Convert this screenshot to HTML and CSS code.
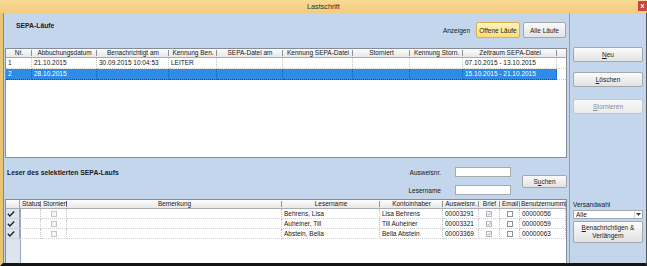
FILE: index.html
```html
<!DOCTYPE html>
<html lang="de">
<head>
<meta charset="utf-8">
<title>Lastschrift</title>
<link rel="stylesheet" href="styles.css">
</head>
<body>
<div class="window">
  <header class="titlebar">
    <span class="title">Lastschrift</span>
    <span class="close">x</span>
  </header>
  <div class="frame">
    <main class="main">
      <section class="runs">
        <div class="runs-head">
          <h2 class="section-title">SEPA-Läufe</h2>
          <div class="filter">
            <span class="filter-label">Anzeigen</span>
            <button class="btn btn-active btn-open">Offene Läufe</button>
            <button class="btn btn-all">Alle Läufe</button>
          </div>
        </div>
        <div class="grid grid-runs">
          <table class="tbl">
            <colgroup>
              <col style="width:26px"><col style="width:65px"><col style="width:72px"><col style="width:48px"><col style="width:66px"><col style="width:70px"><col style="width:57px"><col style="width:53px"><col style="width:94px"><col style="width:9px">
            </colgroup>
            <thead>
              <tr><th>Nr.</th><th>Abbuchungsdatum</th><th>Benachrichtigt am</th><th>Kennung Ben.</th><th>SEPA-Datei am</th><th>Kennung SEPA-Datei</th><th>Storniert</th><th>Kennung Storn.</th><th>Zeitraum SEPA-Datei</th><th class="fill"></th></tr>
            </thead>
            <tbody>
              <tr><td>1</td><td>21.10.2015</td><td>30.09.2015 10:04:53</td><td>LEITER</td><td></td><td></td><td></td><td></td><td>07.10.2015 - 13.10.2015</td><td class="fill"></td></tr>
              <tr class="sel"><td>2</td><td>28.10.2015</td><td></td><td></td><td></td><td></td><td></td><td></td><td>15.10.2015 - 21.10.2015</td><td class="fill"></td></tr>
            </tbody>
          </table>
        </div>
      </section>
      <section class="readers">
        <div class="readers-head">
          <h2 class="section-title">Leser des selektierten SEPA-Laufs</h2>
          <div class="search">
            <div class="fields">
              <label class="field-label" for="ausweis">Ausweisnr.</label>
              <input class="field-input" id="ausweis" type="text">
              <label class="field-label" for="lesername">Lesername</label>
              <input class="field-input" id="lesername" type="text">
            </div>
            <button class="btn btn-search">S<u>u</u>chen</button>
          </div>
        </div>
        <div class="grid grid-readers">
          <table class="tbl tbl-readers">
            <colgroup>
              <col style="width:14px"><col style="width:21px"><col style="width:26px"><col style="width:215px"><col style="width:98px"><col style="width:63px"><col style="width:36px"><col style="width:21px"><col style="width:20px"><col style="width:46px">
            </colgroup>
            <thead>
              <tr><th class="rowhead"></th><th>Status</th><th>Storniert</th><th>Bemerkung</th><th>Lesername</th><th>Kontoinhaber</th><th>Ausweisnr.</th><th>Brief</th><th>Email</th><th class="last">Benutzernumm</th></tr>
            </thead>
            <tbody>
              <tr>
                <td class="rowhead"><svg class="tick" width="8" height="6" viewBox="0 0 8 6"><path d="M0.8 2.8 L2.9 5 L7.2 0.6" fill="none" stroke="#1c2633" stroke-width="1.4"/></svg></td>
                <td></td><td class="c"><span class="cb cb-dis"></span></td><td></td><td>Behrens, Lisa</td><td>Lisa Behrens</td><td>00003291</td>
                <td class="c"><svg class="cbsvg" width="6" height="6" viewBox="0 0 6 6"><rect x="0.5" y="0.5" width="5" height="5" fill="#fafafa" stroke="#b5b9be"/><path d="M1.5 3 L2.6 4.2 L4.6 1.6" fill="none" stroke="#8d9298" stroke-width="0.8"/></svg></td><td class="c"><span class="cb"></span></td><td>00000056</td>
              </tr>
              <tr>
                <td class="rowhead"><svg class="tick" width="8" height="6" viewBox="0 0 8 6"><path d="M0.8 2.8 L2.9 5 L7.2 0.6" fill="none" stroke="#1c2633" stroke-width="1.4"/></svg></td>
                <td></td><td class="c"><span class="cb cb-dis"></span></td><td></td><td>Auheiner, Till</td><td>Till Auheiner</td><td>00003321</td>
                <td class="c"><svg class="cbsvg" width="6" height="6" viewBox="0 0 6 6"><rect x="0.5" y="0.5" width="5" height="5" fill="#fafafa" stroke="#b5b9be"/><path d="M1.5 3 L2.6 4.2 L4.6 1.6" fill="none" stroke="#8d9298" stroke-width="0.8"/></svg></td><td class="c"><span class="cb"></span></td><td>00000059</td>
              </tr>
              <tr>
                <td class="rowhead"><svg class="tick" width="8" height="6" viewBox="0 0 8 6"><path d="M0.8 2.8 L2.9 5 L7.2 0.6" fill="none" stroke="#1c2633" stroke-width="1.4"/></svg></td>
                <td></td><td class="c"><span class="cb cb-dis"></span></td><td></td><td>Abstein, Bella</td><td>Bella Abstein</td><td>00003369</td>
                <td class="c"><svg class="cbsvg" width="6" height="6" viewBox="0 0 6 6"><rect x="0.5" y="0.5" width="5" height="5" fill="#fafafa" stroke="#b5b9be"/><path d="M1.5 3 L2.6 4.2 L4.6 1.6" fill="none" stroke="#8d9298" stroke-width="0.8"/></svg></td><td class="c"><span class="cb"></span></td><td>00000063</td>
              </tr>
            </tbody>
          </table>
        </div>
      </section>
    </main>
    <aside class="side">
      <button class="btn side-btn"><u>N</u>eu</button>
      <button class="btn side-btn btn-delete"><u>L</u>öschen</button>
      <button class="btn side-btn btn-cancel" disabled><u>S</u>tornieren</button>
      <div class="dispatch">
        <span class="dispatch-label">Versandwahl</span>
        <div class="combo"><span class="combo-value">Alle</span><span class="combo-arrow"><svg width="5" height="3" viewBox="0 0 5 3"><path d="M0 0 H5 L2.5 3 Z" fill="#444"/></svg></span></div>
        <button class="btn btn-notify"><u>B</u>enachrichtigen &amp;<br>Verlängern</button>
      </div>
    </aside>
  </div>
</div>
</body>
</html>
```

FILE: styles.css
```css
* { box-sizing: border-box; margin: 0; padding: 0; }
html, body { width: 647px; height: 266px; overflow: hidden; }
body {
  font-family: "Liberation Sans", Arial, sans-serif;
  font-size: 6.5px;
  color: #161616;
  background: #c4d6ec;
}
.window {
  width: 647px;
  height: 266px;
  display: flex;
  flex-direction: column;
  background: #c4d6ec;
}
.titlebar {
  height: 13px;
  flex: none;
  display: grid;
  grid-template-columns: 1fr auto 1fr;
  align-items: center;
  background: linear-gradient(#f8d994, #f3cd80);
}
.titlebar .title { grid-column: 2; font-size: 7.2px; color: #2a2a2a; }
.close {
  grid-column: 3;
  justify-self: end;
  align-self: start;
  width: 9px;
  height: 10px;
  margin-top: 1px;
  background: #c8463c;
  color: #fff;
  font-size: 7px;
  line-height: 9px;
  text-align: center;
  font-weight: bold;
}
.frame {
  flex: 1;
  min-height: 0;
  display: flex;
  border-left: 3px solid #e8c571;
  border-right: 1px solid #4d5560;
  border-bottom: 3px solid #141414;
}
.main {
  width: 566px;
  flex: none;
  display: flex;
  flex-direction: column;
  border-left: 1px solid #7f8896;
}
.runs { height: 145px; display: flex; flex-direction: column; }
.runs-head {
  height: 35px;
  flex: none;
  display: flex;
  justify-content: space-between;
  align-items: flex-start;
  padding: 9px 3px 0 12px;
}
.section-title { font-size: 6.8px; font-weight: bold; line-height: 8px; color: #1a1a1a; }
.filter { display: flex; align-items: center; gap: 3px; }
.filter-label { margin-right: 3px; }
.btn {
  font: inherit;
  color: #222;
  height: 16px;
  border: 1px solid #a3a6aa;
  border-radius: 2px;
  background: linear-gradient(#fbfbfb, #e2e2e2);
}
.btn-active { background: linear-gradient(#fff3bd, #fcdd78); border-color: #d9b04c; }
.btn-open { width: 44px; }
.btn-all { width: 43px; }

.grid {
  flex: 1;
  min-height: 0;
  margin: 0 2px 0 1px;
  background: #fff;
  border: 1px solid #858d99;
  overflow: hidden;
}
.tbl {
  border-collapse: separate;
  border-spacing: 0;
  table-layout: fixed;
  width: 560px;
}
.tbl th {
  font-weight: normal;
  line-height: 8px;
  height: 9px;
  padding: 0 2px;
  text-align: center;
  white-space: nowrap;
  overflow: hidden;
  border-bottom: 1px solid #a9adb3;
  background:
    linear-gradient(#8e9399, #8e9399) right center / 1px 6px no-repeat,
    linear-gradient(#fdfdfd, #e7e7e7);
}
.tbl th.fill { background: linear-gradient(#fdfdfd, #e7e7e7); }
.tbl th.last { padding: 0 0 0 1px; text-align: left; }
.tbl td {
  line-height: 10px;
  height: 11px;
  padding: 0 2px;
  white-space: nowrap;
  overflow: hidden;
  border-right: 1px dotted #c4c4c4;
  border-bottom: 1px dotted #cdcdcd;
}
.tbl td.fill { border-right: 0; }
.tbl tr.sel td:not(.fill) {
  background: #2e8be6;
  color: #fff;
  border-right-color: #1c5ea8;
  border-bottom: 1px dotted #174f8e;
}

.readers { flex: 1; display: flex; flex-direction: column; }
.readers-head {
  height: 41px;
  flex: none;
  display: flex;
  justify-content: space-between;
  align-items: flex-start;
  padding: 9px 2px 0 3px;
}
.readers-head .section-title { margin-top: 2px; }
.search { display: flex; align-items: center; }
.fields {
  display: grid;
  grid-template-columns: auto 56px;
  column-gap: 14px;
  row-gap: 8px;
  align-items: center;
}
.field-label { text-align: right; }
.field-input {
  height: 10px;
  width: 56px;
  border: 1px solid #a7abb0;
  background: #fff;
}
.btn-search { width: 45px; height: 13px; margin-left: 11px; }

.grid-readers {
  border-bottom: 0;
  background: linear-gradient(90deg, #dde4ed 0 14px, #98a6b6 14px 15px, #fff 15px);
}
.tbl-readers td { line-height: 9px; height: 10px; }
.tbl-readers td.rowhead {
  background: #dde4ed;
  border-right: 1px solid #98a6b6;
  border-bottom: 1px solid #c9d1db;
  padding: 0 0 0 1px;
}
.tbl-readers th.rowhead { background: linear-gradient(#fdfdfd, #e7e7e7); border-right: 1px solid #98a6b6; }
.tick { display: block; }
.tbl td.c { text-align: center; }
.cbsvg { display: inline-block; vertical-align: middle; }
.cb {
  display: inline-block;
  width: 6px;
  height: 6px;
  vertical-align: middle;
  border: 1px solid #8f9499;
  background: #fff;
}
.cb-dis { border-color: #c2c5c9; background: #f6f6f6; }

.side {
  flex: 1;
  display: flex;
  flex-direction: column;
  border-left: 1px solid #8d9fb6;
  padding: 34px 3px 20px 3px;
}
.side-btn { width: 70px; height: 15px; flex: none; }
.btn-delete { margin-top: 10px; }
.btn-cancel { margin-top: 12px; color: #8a8d91; border-color: #c3c6ca; background: linear-gradient(#f8f8f8, #ebebeb); }
.dispatch { margin-top: auto; display: flex; flex-direction: column; }
.dispatch-label { line-height: 8px; }
.combo {
  margin-top: 1px;
  height: 9px;
  display: flex;
  border: 1px solid #a2a8af;
  background: #fff;
}
.combo-value { flex: 1; padding-left: 2px; line-height: 7px; }
.combo-arrow {
  width: 8px;
  display: flex;
  align-items: center;
  justify-content: center;
  border-left: 1px solid #d5d8dc;
}
.btn-notify { margin-top: 2px; height: 22px; width: 70px; line-height: 8px; }
u { text-decoration: underline; }
```
